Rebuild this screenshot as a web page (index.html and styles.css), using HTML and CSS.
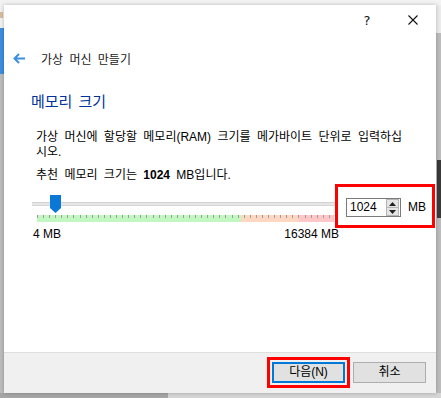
FILE: index.html
```html
<!DOCTYPE html>
<html lang="ko">
<head>
<meta charset="utf-8">
<link rel="stylesheet" href="styles.css">
</head>
<body>
<div class="dialog">
  <div class="titlebar">
    <span class="tb-btn help">?</span>
    <span class="tb-btn close"><svg width="10" height="10" viewBox="0 0 10 10"><path d="M0.5 0.5L9.5 9.5M9.5 0.5L0.5 9.5" stroke="#111" stroke-width="1.1" fill="none"/></svg></span>
  </div>
  <div class="header">
    <svg class="back" width="12" height="11" viewBox="0 0 12 11"><path d="M12 5.5H1.5M6 1L1.5 5.5L6 10" fill="none" stroke="#3b8fe5" stroke-width="2"/></svg>
    <span class="wiz-title">가상 머신 만들기</span>
  </div>
  <div class="content">
    <h1 class="heading">메모리 크기</h1>
    <p class="desc">가상 머신에 할당할 메모리(RAM) 크기를 메가바이트 단위로 입력하십<br>시오.</p>
    <p class="rec">추천 메모리 크기는 <b>1024</b> MB입니다.</p>
    <div class="mem-row">
      <div class="slider">
        <div class="track"><span class="thumb"></span></div>
        <div class="scale"><span class="seg g"></span><span class="seg o"></span><span class="seg r"></span></div>
        <div class="labels"><span>4 MB</span><span>16384 MB</span></div>
      </div>
      <div class="spin-area">
        <div class="spinbox">
          <span class="spin-val">1024</span>
          <span class="spin-btns">
            <span class="sb up"><svg width="7" height="4" viewBox="0 0 7 4"><path d="M0 4L3.5 0L7 4Z" fill="#222"/></svg></span>
            <span class="sb down"><svg width="7" height="4" viewBox="0 0 7 4"><path d="M0 0L3.5 4L7 0Z" fill="#222"/></svg></span>
          </span>
        </div>
        <span class="unit">MB</span>
      </div>
    </div>
  </div>
  <div class="footer">
    <button class="btn primary">다음(N)</button>
    <button class="btn">취소</button>
  </div>
</div>
</body>
</html>
```

FILE: styles.css
```css
* { box-sizing: border-box; }
html, body { margin: 0; padding: 0; }
body {
  width: 441px;
  height: 398px;
  overflow: hidden;
  font-family: "Liberation Sans", "Noto Sans CJK KR", sans-serif;
  font-size: 12px;
  color: #000;
  background:
    linear-gradient(#3d8fe3, #3d8fe3) 0 28px / 4px 46px no-repeat,
    linear-gradient(#d9bd97, #d9bd97) 0 12px / 3px 6px no-repeat,
    linear-gradient(#f2f2f2, #f2f2f2) 0 0 / 4px 28px no-repeat,
    linear-gradient(#f3f3f3, #f3f3f3) 0 0 / 100% 5px no-repeat,
    linear-gradient(#ececec, #ececec) right 0 top 0 / 5px 33px no-repeat,
    linear-gradient(#3a3a3a, #3a3a3a) right 0 top 160px / 4px 58px no-repeat,
    linear-gradient(#a6a6a6, #a6a6a6) 0 393px / 168px 5px no-repeat,
    linear-gradient(#d6d6d6, #d6d6d6) 168px 393px / 273px 5px no-repeat,
    #bdbdbd;
}
.dialog {
  margin: 5px 0 0 4px;
  width: 432px;
  height: 388px;
  background: #fff;
  display: flex;
  flex-direction: column;
  box-shadow: 0 0 4px rgba(0,0,0,0.25);
}
.titlebar {
  height: 30px;
  display: flex;
  justify-content: flex-end;
}
.tb-btn {
  width: 46px;
  height: 30px;
  display: flex;
  align-items: center;
  justify-content: center;
}
.help {
  font-family: "DejaVu Sans", sans-serif;
  font-size: 13px;
  color: #111;
}
.header {
  height: 46px;
  display: flex;
  align-items: center;
  padding-left: 9px;
}
.back { display: block; margin-right: 16px; }
.wiz-title {
  font-size: 12px;
  color: #1a1a1a;
  word-spacing: 3px;
}
.content {
  padding-left: 28px;
}
.heading {
  margin: 11px 0 0 -1px;
  font-size: 15px;
  line-height: 20px;
  font-weight: normal;
  color: #003399;
  word-spacing: 2px;
}
.desc {
  margin: 18px 0 0 4px;
  line-height: 15px;
  word-spacing: 3px;
}
.rec {
  margin: 8px 0 0 4px;
  line-height: 15px;
  word-spacing: 3px;
}
.mem-row {
  margin-top: 1px;
  display: flex;
  align-items: flex-start;
}
.slider {
  width: 303px;
  padding-top: 11px;
}
.track {
  height: 18px;
  background:
    linear-gradient(#d2d2d2, #d2d2d2) 0 7px / 100% 1px no-repeat,
    linear-gradient(#e6e6e6, #e6e6e6) 0 8px / 100% 2px no-repeat,
    linear-gradient(#d8d8d8, #d8d8d8) 0 10px / 100% 1px no-repeat;
  padding-left: 18px;
}
.thumb {
  display: block;
  width: 11px;
  height: 18px;
  background: #0a78d6;
  clip-path: polygon(0 0, 100% 0, 100% 72%, 50% 100%, 0 72%);
}
.scale {
  margin: 2px 0 0 5px;
  width: 297px;
  height: 7px;
  display: flex;
  position: relative;
}
.scale::after {
  content: "";
  position: absolute;
  left: 0; top: 0;
  width: 100%;
  height: 3px;
  background: repeating-linear-gradient(90deg, #9c9c9c 0 1px, transparent 1px 6.08px);
}
.seg { display: block; height: 7px; }
.g { width: 204px; background: #c2f7c2; }
.o { width: 58px; background: #fed7c3; }
.r { width: 35px; background: #ffc7c7; }
.labels {
  margin: 5px -4px 0 1px;
  display: flex;
  justify-content: space-between;
  line-height: 14px;
}
.spin-area {
  width: 100px;
  height: 44px;
  border: 3px solid #ff0000;
  display: flex;
  align-items: flex-start;
  padding: 11px 0 0 8px;
}
.spinbox {
  width: 55px;
  height: 19px;
  border: 1px solid #7a7a7a;
  display: flex;
  align-items: center;
  justify-content: space-between;
  padding: 0 1px 0 3px;
  background: #fff;
}
.spin-val { font-size: 12px; line-height: 17px; }
.spin-btns {
  width: 13px;
  height: 17px;
  display: flex;
  flex-direction: column;
  border: 1px solid #b5b5b5;
  background: #e5e5e5;
}
.sb {
  flex: 1;
  display: flex;
  align-items: center;
  justify-content: center;
}
.sb.up { border-bottom: 1px solid #b5b5b5; }
.sb svg { display: block; }
.unit {
  margin-left: 7px;
  line-height: 19px;
}
.footer {
  margin-top: auto;
  height: 41px;
  border-top: 1px solid #dfdfdf;
  background: #f0f0f0;
  display: flex;
  justify-content: flex-end;
  align-items: flex-start;
  gap: 8px;
  padding: 9px 10px 0 0;
}
.btn {
  width: 73px;
  height: 21px;
  margin: 0;
  padding: 0;
  font-family: "Liberation Sans", "Noto Sans CJK KR", sans-serif;
  font-size: 12px;
  color: #000;
  background: #e1e1e1;
  border: 1px solid #adadad;
  line-height: 17px;
}
.btn.primary {
  border: 2px solid #0078d7;
  outline: 3px solid #ff0000;
  outline-offset: 2px;
}
```
